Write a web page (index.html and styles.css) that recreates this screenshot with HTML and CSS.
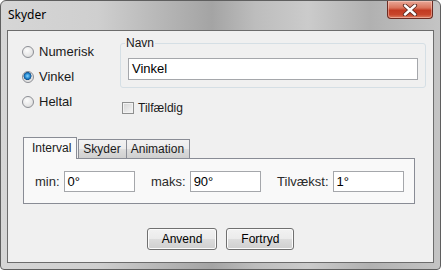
FILE: index.html
```html
<!DOCTYPE html>
<html lang="da">

<head>
    <meta charset="UTF-8">
    <title>Skyder</title>
    <link rel="stylesheet" href="styles.css">
</head>

<body>
    <div class="window">
        <div class="titlebar">
            <span class="title">Skyder</span>
            <span class="close">
                <svg width="16" height="12" viewBox="0 0 16 12">
                    <path d="M3 1.5 L13 10.5 M13 1.5 L3 10.5" stroke="#5a2a22" stroke-width="4.2" stroke-linecap="round" />
                    <path d="M3 1.5 L13 10.5 M13 1.5 L3 10.5" stroke="#fff" stroke-width="2.4" stroke-linecap="round" />
                </svg>
            </span>
        </div>
        <div class="client">
            <div class="top">
                <div class="types">
                    <label class="radio_row"><span class="radio"></span>Numerisk</label>
                    <label class="radio_row"><span class="radio checked"></span>Vinkel</label>
                    <label class="radio_row"><span class="radio"></span>Heltal</label>
                </div>
                <div class="side">
                    <fieldset class="name_group">
                        <legend>Navn</legend>
                        <div class="field wide">Vinkel</div>
                    </fieldset>
                    <label class="check_row"><span class="check"></span>Tilfældig</label>
                </div>
            </div>
            <div class="tabs">
                <div class="tab_strip">
                    <span class="tab active">Interval</span>
                    <span class="tab">Skyder</span>
                    <span class="tab">Animation</span>
                </div>
                <div class="tab_panel">
                    <span class="lbl">min:</span>
                    <div class="field small">0°</div>
                    <span class="lbl sep">maks:</span>
                    <div class="field small">90°</div>
                    <span class="lbl sep">Tilvækst:</span>
                    <div class="field small">1°</div>
                </div>
            </div>
            <div class="buttons">
                <span class="btn">Anvend</span>
                <span class="btn">Fortryd</span>
            </div>
        </div>
    </div>
</body>

</html>
```

FILE: styles.css
```css
* {
    margin: 0;
    padding: 0;
    box-sizing: border-box;
}

body {
    width: 441px;
    height: 270px;
    overflow: hidden;
    font-family: "Liberation Sans", Arial, sans-serif;
    color: #1a1a1a;
    background: #fff;
}

/* ramme */
.window {
    display: flex;
    flex-direction: column;
    width: 441px;
    height: 270px;
    border: 1px solid #5f5f5f;
    border-radius: 6px 6px 4px 4px;
    background: linear-gradient(90deg, #d6d6d6 0%, #cfcfcf 22%, #b4b4b4 38%, #a4a4a4 48%, #bdbdbd 58%, #cbcbcb 70%, #b1b1b1 84%, #c4c4c4 100%);
}

.titlebar {
    display: flex;
    justify-content: space-between;
    align-items: flex-start;
    height: 29px;
    padding-left: 7px;
    padding-right: 7px;
}

.title {
    align-self: center;
    font-family: "Noto Sans", sans-serif;
    font-size: 12px;
    color: #000;
    line-height: 16px;
    margin-top: -1px;
}

.close {
    display: flex;
    justify-content: center;
    align-items: center;
    width: 46px;
    height: 18px;
    border: 1px solid #6b2b22;
    border-top: 0;
    border-radius: 0 0 4px 4px;
    background: linear-gradient(180deg, #e9a898 0%, #d9745c 40%, #c23a22 55%, #c8452b 80%, #dc7d62 100%);
    box-shadow: inset 0 0 0 1px rgba(255, 220, 210, .45);
}

.client {
    flex: 1;
    display: flex;
    flex-direction: column;
    margin: 0 6px 6px;
    border: 1px solid #6c6c6c;
    background: #f0f0f0;
}

/* øverste del */
.top {
    display: flex;
    height: 106px;
}

.types {
    width: 112px;
    padding-top: 8px;
    padding-left: 14px;
}

.radio_row {
    display: flex;
    align-items: center;
    height: 25px;
    font-size: 13px;
}

.radio {
    width: 12px;
    height: 12px;
    margin-right: 5px;
    border: 1px solid #8c8e94;
    border-radius: 50%;
    background: radial-gradient(circle at 40% 35%, #fcfcfc 0%, #e8e8e8 55%, #d2d2d2 100%);
}

.radio.checked {
    background: radial-gradient(circle at 45% 40%, #8ad6ff 0%, #2a8fd6 28%, #0e4f8e 46%, #dcdcdc 52%, #f4f4f4 100%);
}

.side {
    width: 306px;
    padding-top: 5px;
}

.name_group {
    border: 1px solid #d5dfe5;
    border-radius: 3px;
    padding: 8px 7px 7px;
}

.name_group legend {
    margin-left: -3px;
    padding: 0 1px;
    font-size: 12px;
    line-height: 14px;
}

.field {
    height: 22px;
    padding: 0 3px;
    border: 1px solid #a5a7ab;
    background: #fff;
    font-size: 13px;
    line-height: 20px;
    color: #000;
}

.check_row {
    display: flex;
    align-items: center;
    height: 15px;
    margin-top: 12px;
    margin-left: 2px;
    font-size: 12px;
}

.check {
    width: 12px;
    height: 12px;
    margin-right: 4px;
    border: 1px solid #8e8f8f;
    background: linear-gradient(135deg, #d4d4d4 0%, #f6f6f6 100%);
    box-shadow: inset 0 0 0 1px #f2f2f2;
}

/* faneblade */
.tabs {
    margin: 0 18px 0 15px;
}

.tab_strip {
    display: flex;
    align-items: flex-end;
    height: 21px;
}

.tab {
    height: 19px;
    padding: 0 5px 0 4px;
    border: 1px solid #898c95;
    border-bottom: 0;
    border-left: 0;
    background: linear-gradient(180deg, #f2f2f2 0%, #ebebeb 50%, #dddddd 51%, #cfcfcf 100%);
    font-size: 12px;
    line-height: 18px;
}

.tab.active {
    position: relative;
    height: 22px;
    margin-bottom: -1px;
    padding: 0 5px 0 8px;
    border-left: 1px solid #898c95;
    border-right: 1px solid #898c95;
    margin-right: 1px;
    background: #f9f9f9;
    line-height: 20px;
}

.tab.active + .tab {
    border-left: 1px solid #898c95;
}

.tab_panel {
    display: flex;
    align-items: center;
    height: 46px;
    padding: 0 10px 0 11px;
    border: 1px solid #898c95;
    background: #f9f9f9;
}

.lbl {
    margin-right: 4px;
    font-size: 13px;
    color: #2b2b2b;
}

.lbl.sep {
    margin-left: 16px;
}

.field.small {
    width: 72px;
    height: 21px;
    line-height: 19px;
}

/* knapper */
.buttons {
    display: flex;
    justify-content: center;
    gap: 9px;
    margin-top: 24px;
}

.btn {
    height: 22px;
    padding: 0 14px;
    border: 1px solid #707070;
    border-radius: 3px;
    background: linear-gradient(180deg, #f2f2f2 0%, #ebebeb 50%, #dddddd 51%, #cfcfcf 100%);
    box-shadow: inset 0 0 0 1px #fcfcfc;
    font-size: 12px;
    line-height: 20px;
    color: #000;
}
```
